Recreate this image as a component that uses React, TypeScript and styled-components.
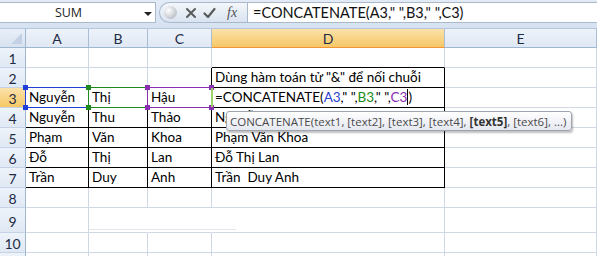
import React from 'react';
import styled, { createGlobalStyle, css } from 'styled-components';

const GlobalStyle = createGlobalStyle`
  body {
    margin: 0;
    background: #ffffff;
    overflow: hidden;
  }
`;

type Edge = 'grid' | 'black' | 'none';

const CELL_FONT = `Lato, "Open Sans", sans-serif`;

const Page = styled.div`
  width: 597px;
  height: 256px;
  overflow: hidden;
  font-family: ${CELL_FONT};
`;

const FormulaBar = styled.div`
  display: flex;
  align-items: stretch;
  height: 29px;
  padding: 2px 0 5px 0;
  box-sizing: border-box;
  background: linear-gradient(#e3ebf6, #d6e2f1);
  border-bottom: 1px solid #b6c6dc;
`;

const NameBox = styled.div`
  position: relative;
  width: 156px;
  display: flex;
  align-items: center;
  justify-content: center;
  background: #ffffff;
  border: 1px solid #aab8cb;
  border-left: none;
  box-sizing: border-box;
  font-family: "Open Sans", sans-serif;
  font-size: 12.5px;
  color: #1e1e1e;
  padding-right: 18px;
`;

const DropArrow = styled.span`
  position: absolute;
  right: 3px;
  top: 9px;
  width: 0;
  height: 0;
  border-left: 4px solid transparent;
  border-right: 4px solid transparent;
  border-top: 4px solid #222;
`;

const ButtonPill = styled.div`
  display: flex;
  align-items: center;
  width: 88px;
  margin-left: 3px;
  border: 1px solid #a9b8cd;
  border-right: none;
  border-radius: 11px 0 0 11px;
  background: linear-gradient(#f4f7fb, #d9e3f0);
  box-sizing: border-box;
  padding-left: 4px;
`;

const Bubble = styled.span`
  width: 13px;
  height: 13px;
  border-radius: 50%;
  background: radial-gradient(circle at 35% 35%, #ffffff, #c9cdd3 60%, #aab0b8);
  margin-right: 5px;
`;

const IconButton = styled.span`
  width: 18px;
  display: flex;
  justify-content: center;
  align-items: center;
`;

const FxLabel = styled.span`
  font-family: "Liberation Serif", serif;
  font-style: italic;
  font-size: 14px;
  color: #555;
  margin-left: 9px;
`;

const FormulaInput = styled.div`
  flex: 1;
  display: flex;
  align-items: center;
  background: #ffffff;
  border: 1px solid #aab8cb;
  border-right: none;
  box-sizing: border-box;
  padding-left: 5px;
  font-size: 14.5px;
  color: #111;
  white-space: pre;
`;

const Sheet = styled.div`
  position: relative;
  display: grid;
  grid-template-columns: 26px 63px 59px 64px 233px 1fr;
  grid-template-rows: 19px repeat(8, 20px) 25px 20px 20px;
`;

const headerBg = css<{ $active?: boolean }>`
  background: ${(p) =>
    p.$active
      ? 'linear-gradient(#fbe1a9, #f6c866)'
      : 'linear-gradient(#eef3fa, #dfe8f4)'};
`;

const Corner = styled.div`
  position: relative;
  background: linear-gradient(#e9eff8, #d7e2f0);
  border-right: 1px solid #9eb6ce;
  border-bottom: 1px solid #9eb6ce;
  box-sizing: border-box;
  &::after {
    content: '';
    position: absolute;
    right: 3px;
    bottom: 3px;
    width: 0;
    height: 0;
    border-left: 11px solid transparent;
    border-bottom: 11px solid #c3d1e4;
  }
`;

const ColHeader = styled.div<{ $active?: boolean }>`
  ${headerBg};
  border-right: 1px solid #a9bdd4;
  border-bottom: 1px solid ${(p) => (p.$active ? '#f29536' : '#9eb6ce')};
  box-sizing: border-box;
  display: flex;
  align-items: center;
  justify-content: center;
  font-size: 14px;
  color: #1d2b45;
  padding-top: 1px;
`;

const RowHeader = styled.div<{ $active?: boolean }>`
  ${headerBg};
  border-right: 1px solid ${(p) => (p.$active ? '#f29536' : '#9eb6ce')};
  border-bottom: 1px solid #c5d3e6;
  box-sizing: border-box;
  display: flex;
  align-items: center;
  justify-content: center;
  font-size: 14px;
  color: #1d2b45;
  padding-top: 2px;
`;

const edgeColor = (e: Edge) =>
  e === 'black' ? '#000000' : e === 'grid' ? '#d0d7e5' : 'transparent';

const Cell = styled.div<{ $r: Edge; $b: Edge }>`
  position: relative;
  border-right: 1px solid ${(p) => edgeColor(p.$r)};
  border-bottom: 1px solid ${(p) => edgeColor(p.$b)};
  box-sizing: border-box;
  display: flex;
  align-items: flex-end;
  padding: 0 0 1px 3px;
  font-size: 13.5px;
  line-height: 18px;
  color: #000;
  white-space: pre;
`;

const RefFrame = styled.span<{ $color: string }>`
  position: absolute;
  z-index: 2;
  top: -1px;
  left: -1px;
  right: -1px;
  bottom: -1px;
  border: 1px solid ${(p) => p.$color};
  pointer-events: none;
`;

const Handle = styled.span<{ $color: string; $x: 'l' | 'r'; $y: 't' | 'b' }>`
  position: absolute;
  width: 5px;
  height: 5px;
  background: ${(p) => p.$color};
  ${(p) => (p.$x === 'l' ? 'left: -3px;' : 'right: -3px;')}
  ${(p) => (p.$y === 't' ? 'top: -3px;' : 'bottom: -3px;')}
`;

const EditEdge = styled.span`
  position: absolute;
  z-index: 3;
  left: -1px;
  top: 0;
  bottom: 0;
  width: 2px;
  background: #9fd36a;
`;

const Ref = styled.span<{ $color: string }>`
  color: ${(p) => p.$color};
`;

const Caret = styled.span`
  display: inline-block;
  width: 1px;
  height: 16px;
  background: #000;
  vertical-align: -3px;
`;

const Tooltip = styled.div`
  position: absolute;
  z-index: 5;
  left: 226px;
  top: 82px;
  height: 18px;
  padding: 0 5px 0 3px;
  display: flex;
  align-items: center;
  background: linear-gradient(#ffffff, #e6e8f1);
  border: 1px solid #9ea4ae;
  border-radius: 3px;
  box-shadow: 1px 2px 2px rgba(0, 0, 0, 0.25);
  font-family: "Open Sans", sans-serif;
  font-size: 11.5px;
  color: #4a4a4a;
  white-space: pre;
  b {
    font-weight: 700;
    color: #333;
  }
`;

const Smudge = styled.div`
  position: absolute;
  left: 89px;
  top: 200px;
  width: 147px;
  height: 1px;
  background: #e2e6ec;
`;

const columns = ['A', 'B', 'C', 'D', 'E'];

type RowData = {
  n: number;
  cells: string[];
  r: Edge[];
  b: Edge[];
};

const G: Edge = 'grid';
const K: Edge = 'black';
const N: Edge = 'none';

const rows: RowData[] = [
  { n: 1, cells: ['', '', '', '', ''], r: [G, G, G, G, G], b: [G, G, G, K, G] },
  { n: 2, cells: ['', '', '', 'Dùng hàm toán tử "&" để nối chuỗi', ''], r: [G, G, K, K, G], b: [K, K, K, K, G] },
  { n: 3, cells: ['Nguyễn', 'Thị', 'Hậu', '', ''], r: [K, K, K, K, G], b: [K, K, K, K, G] },
  { n: 4, cells: ['Nguyễn', 'Thu', 'Thảo', 'Nguyễn Thu Thảo', ''], r: [K, K, K, K, G], b: [K, K, K, K, G] },
  { n: 5, cells: ['Phạm', 'Văn', 'Khoa', 'Phạm Văn Khoa', ''], r: [K, K, K, K, G], b: [K, K, K, K, G] },
  { n: 6, cells: ['Đỗ', 'Thị', 'Lan', 'Đỗ Thị Lan', ''], r: [K, K, K, K, G], b: [K, K, K, K, G] },
  { n: 7, cells: ['Trần', 'Duy', 'Anh', 'Trần  Duy Anh', ''], r: [K, K, K, K, G], b: [K, K, K, K, G] },
  { n: 8, cells: ['', '', '', '', ''], r: [G, G, G, G, G], b: [G, G, G, G, G] },
  { n: 9, cells: ['', '', '', '', ''], r: [G, N, N, G, G], b: [G, G, G, G, G] },
  { n: 10, cells: ['', '', '', '', ''], r: [G, G, G, G, G], b: [G, G, G, G, G] },
  { n: 11, cells: ['', '', '', '', ''], r: [G, G, G, G, G], b: [G, G, G, G, G] },
];

const refs: Record<number, string> = { 0: '#1f3fd8', 1: '#1c8a1c', 2: '#8a2fb0' };

const Frame = ({ color }: { color: string }) => (
  <RefFrame $color={color}>
    <Handle $color={color} $x="l" $y="t" />
    <Handle $color={color} $x="r" $y="t" />
    <Handle $color={color} $x="l" $y="b" />
    <Handle $color={color} $x="r" $y="b" />
  </RefFrame>
);

const EditingFormula = () => (
  <span>
    =CONCATENATE(<Ref $color="#2a3fd0">A3</Ref>," ",<Ref $color="#1c8a1c">B3</Ref>," ",
    <Ref $color="#8a2fb0">C3</Ref>
    <Caret />)
  </span>
);

export default function App() {
  return (
    <Page>
      <GlobalStyle />
      <FormulaBar>
        <NameBox>
          SUM
          <DropArrow />
        </NameBox>
        <ButtonPill>
          <Bubble />
          <IconButton>
            <svg width="12" height="12" viewBox="0 0 12 12">
              <path d="M2 2 L10 10 M10 2 L2 10" stroke="#5a5a5a" strokeWidth="2" strokeLinecap="round" />
            </svg>
          </IconButton>
          <IconButton>
            <svg width="13" height="12" viewBox="0 0 13 12">
              <path d="M1.5 6.5 L5 10 L11.5 2" stroke="#5a5a5a" strokeWidth="2.2" fill="none" strokeLinecap="round" strokeLinejoin="round" />
            </svg>
          </IconButton>
          <FxLabel>fx</FxLabel>
        </ButtonPill>
        <FormulaInput>=CONCATENATE(A3," ",B3," ",C3)</FormulaInput>
      </FormulaBar>
      <Sheet>
        <Corner />
        {columns.map((c) => (
          <ColHeader key={c} $active={c === 'D'}>
            {c}
          </ColHeader>
        ))}
        {rows.map((row) => (
          <React.Fragment key={row.n}>
            <RowHeader $active={row.n === 3}>{row.n}</RowHeader>
            {row.cells.map((text, i) => (
              <Cell key={i} $r={row.r[i]} $b={row.b[i]}>
                {text}
                {row.n === 3 && refs[i] && <Frame color={refs[i]} />}
                {row.n === 3 && i === 3 && (
                  <>
                    <EditEdge />
                    <EditingFormula />
                  </>
                )}
              </Cell>
            ))}
          </React.Fragment>
        ))}
        <Tooltip>
          CONCATENATE(text1, [text2], [text3], [text4], <b>[text5]</b>, [text6], ...)
        </Tooltip>
        <Smudge />
      </Sheet>
    </Page>
  );
}
